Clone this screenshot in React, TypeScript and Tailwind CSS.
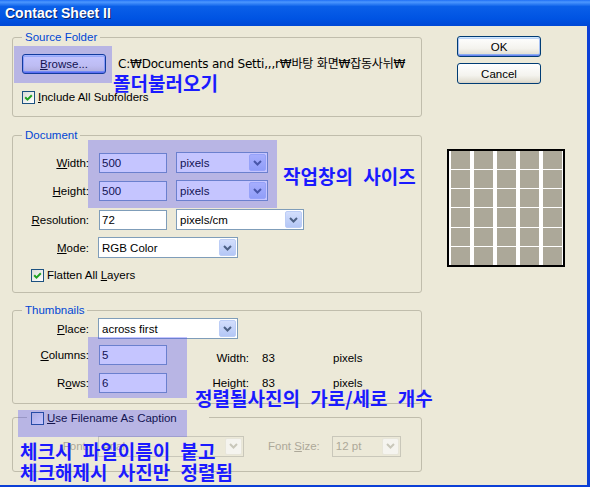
import type { ReactNode } from 'react'

// ─── Small XP-style controls ──────────────────────────────────────────────────

function XPButton({ children, isDefault, className }: { children: ReactNode; isDefault?: boolean; className: string }) {
  return (
    <div
      className={`flex items-center justify-center border border-[#003c74] rounded-[3px] bg-[linear-gradient(to_bottom,#ffffff_0%,#f4f3ee_60%,#e3e0d4_90%,#d6d0c5_100%)] ${
        isDefault
          ? 'shadow-[inset_0_1px_0_#cee7ff,inset_0_-1px_0_#6982ee,inset_1px_0_0_#a9c2f4,inset_-1px_0_0_#a9c2f4,inset_0_2px_0_#bcd4f6,inset_0_-2px_0_#89adf0]'
          : ''
      } ${className}`}
    >
      {children}
    </div>
  )
}

function Chevron({ color }: { color: string }) {
  return (
    <svg width="9" height="6" viewBox="0 0 9 6">
      <polyline points="1,1 4.5,4.5 8,1" fill="none" stroke={color} strokeWidth="2" />
    </svg>
  )
}

function Select({ value, className, disabled }: { value: string; className: string; disabled?: boolean }) {
  return (
    <div
      className={`flex h-[21px] border ${
        disabled ? 'border-[#c9c7ba] text-[#aca899]' : 'border-[#7f9db9] bg-white'
      } ${className}`}
    >
      <span className="flex-1 flex items-center pl-[3px] overflow-hidden whitespace-nowrap">{value}</span>
      <span
        className={`m-px w-[17px] flex items-center justify-center rounded-[2px] border ${
          disabled
            ? 'border-[#e8e6da] bg-[#f5f4ef]'
            : 'border-[#bccdf6] bg-[linear-gradient(to_bottom,#d3defc,#b4c7f6)]'
        }`}
      >
        <Chevron color={disabled ? '#c9c7ba' : '#4d6185'} />
      </span>
    </div>
  )
}

function TextBox({ value, className }: { value: string; className: string }) {
  return (
    <div className={`h-[20px] border border-[#7f9db9] bg-white flex items-center pl-[2px] ${className}`}>{value}</div>
  )
}

function Check({ checked, children }: { checked?: boolean; children: ReactNode }) {
  return (
    <div className="flex items-center">
      <span className="w-[13px] h-[13px] shrink-0 border border-[#1c5180] bg-[linear-gradient(135deg,#dcdcd7,#ffffff)] flex items-center justify-center">
        {checked && (
          <svg width="9" height="9" viewBox="0 0 9 9">
            <polyline points="1.2,4.2 3.5,6.6 7.8,2.2" fill="none" stroke="#21a121" strokeWidth="2" />
          </svg>
        )}
      </span>
      <span className="ml-[3px] whitespace-nowrap">{children}</span>
    </div>
  )
}

function Group({ title, className, children }: { title?: string; className: string; children: ReactNode }) {
  return (
    <div className={`relative border border-[#c0bdac] rounded-[3px] ${className}`}>
      {title && (
        <span className="absolute -top-[8px] left-[9px] px-[3px] bg-[#ece9d8] text-[#0046d5] leading-[14px] whitespace-nowrap">
          {title}
        </span>
      )}
      {children}
    </div>
  )
}

function Label({ children, disabled }: { children: ReactNode; disabled?: boolean }) {
  return (
    <span className={`w-[76px] shrink-0 text-right whitespace-nowrap ${disabled ? 'text-[#aca899]' : ''}`}>
      {children}
    </span>
  )
}

// ─── Annotation layer ─────────────────────────────────────────────────────────

const KO = "font-['Noto_Sans_CJK_KR',sans-serif] font-bold text-[19px] leading-[21px] text-[#1a1aff] [word-spacing:6px] whitespace-nowrap"

function Annotations() {
  return (
    <>
      <div className="absolute left-[14px] top-[46px] w-[98px] h-[37px] bg-[#4040ff]/30" />
      <div className={`absolute left-[113px] top-[72px] ${KO}`}>폴더불러오기</div>

      <div className="absolute left-[88px] top-[140px] w-[189px] h-[68px] bg-[#4040ff]/30" />
      <div className={`absolute left-[283px] top-[165px] ${KO}`}>작업창의 사이즈</div>

      <div className="absolute left-[88px] top-[337px] w-[99px] h-[61px] bg-[#4040ff]/30" />
      <div className={`absolute left-[195px] top-[387px] ${KO}`}>정렬될사진의 가로/세로 개수</div>

      <div className="absolute left-[18px] top-[410px] w-[169px] h-[27px] bg-[#4040ff]/30" />
      <div className={`absolute left-[20px] top-[440px] ${KO}`}>
        <div>체크시 파일이름이 붙고</div>
        <div>체크해제시 사진만 정렬됨</div>
      </div>
    </>
  )
}

// ─── Dialog ───────────────────────────────────────────────────────────────────

export default function App() {
  return (
    <div className="w-[590px] h-[487px] relative overflow-hidden flex flex-col bg-[#ece9d8] text-black text-[11.5px] leading-[14px] font-['Tahoma','Liberation_Sans',Arial,sans-serif]">
      {/* Title bar */}
      <div className="h-[26px] shrink-0 flex items-center pl-[5px] bg-[linear-gradient(to_bottom,#1f6ff5_0%,#4c97ff_8%,#0a5fe8_25%,#0054e3_70%,#0048d6_100%)]">
        <span className="text-white font-bold text-[14px] font-['Liberation_Sans',Arial,sans-serif] [text-shadow:1px_1px_0_#0a246a]">
          Contact Sheet II
        </span>
      </div>

      <div className="flex-1 flex border-r-[3px] border-b-[2px] border-[#0b3fd6]">
        {/* Left column */}
        <div className="ml-[12px] w-[410px] flex flex-col">
          <Group title="Source Folder" className="mt-[11px] h-[80px]">
            <div className="pl-[9px] pt-[16px]">
              <div className="flex items-center">
                <XPButton isDefault className="w-[84px] h-[20px]">
                  <span><u>B</u>rowse...</span>
                </XPButton>
                <span className="ml-[12px] text-[12px] whitespace-nowrap font-['DejaVu_Sans','Noto_Sans_CJK_KR',sans-serif] tracking-[-0.2px]">
                  C:₩Documents and Setti,,,r₩바탕 화면₩잡동사뉘₩
                </span>
              </div>
              <div className="mt-[16px]">
                <Check checked><u>I</u>nclude All Subfolders</Check>
              </div>
            </div>
          </Group>

          <Group title="Document" className="mt-[18px] h-[158px]">
            <div className="pt-[16px] flex flex-col">
              <div className="h-[21px] flex items-center">
                <Label><u>W</u>idth:</Label>
                <TextBox value="500" className="ml-[10px] w-[68px]" />
                <Select value="pixels" className="ml-[9px] w-[92px]" />
              </div>
              <div className="mt-[7px] h-[21px] flex items-center">
                <Label><u>H</u>eight:</Label>
                <TextBox value="500" className="ml-[10px] w-[68px]" />
                <Select value="pixels" className="ml-[9px] w-[92px]" />
              </div>
              <div className="mt-[8px] h-[21px] flex items-center">
                <Label><u>R</u>esolution:</Label>
                <TextBox value="72" className="ml-[10px] w-[68px]" />
                <Select value="pixels/cm" className="ml-[9px] w-[128px]" />
              </div>
              <div className="mt-[7px] h-[21px] flex items-center">
                <Label><u>M</u>ode:</Label>
                <Select value="RGB Color" className="ml-[9px] w-[140px]" />
              </div>
              <div className="mt-[10px] pl-[18px]">
                <Check checked>Flatten All <u>L</u>ayers</Check>
              </div>
            </div>
          </Group>

          <Group title="Thumbnails" className="mt-[17px] h-[94px]">
            <div className="pt-[7px] flex flex-col">
              <div className="h-[21px] flex items-center">
                <Label><u>P</u>lace:</Label>
                <Select value="across first" className="ml-[9px] w-[140px]" />
              </div>
              <div className="mt-[5px] h-[21px] flex items-center">
                <Label><u>C</u>olumns:</Label>
                <TextBox value="5" className="ml-[10px] w-[68px]" />
                <div className="flex pt-[6px]">
                  <span className="w-[82px] text-right">Width:</span>
                  <span className="ml-[13px] w-[71px]">83</span>
                  <span>pixels</span>
                </div>
              </div>
              <div className="mt-[7px] h-[21px] flex items-center">
                <Label>R<u>o</u>ws:</Label>
                <TextBox value="6" className="ml-[10px] w-[68px]" />
                <div className="flex">
                  <span className="w-[82px] text-right">Height:</span>
                  <span className="ml-[13px] w-[71px]">83</span>
                  <span>pixels</span>
                </div>
              </div>
            </div>
          </Group>

          <Group className="mt-[13px] h-[55px]">
            <div className="absolute left-[14px] -top-[7px] w-[182px] pl-[4px] bg-[#ece9d8]">
              <Check><u>U</u>se Filename As Caption</Check>
            </div>
            <div className="pt-[18px] h-[20px] flex items-center box-content">
              <Label disabled>Font:</Label>
              <Select disabled value="Arial" className="ml-[9px] w-[146px] h-[20px]" />
              <span className="ml-[24px] text-[#aca899] whitespace-nowrap">
                Font <u>S</u>ize:
              </span>
              <Select disabled value="12 pt" className="ml-[12px] w-[69px] h-[20px]" />
            </div>
          </Group>
        </div>

        {/* Right column */}
        <div className="ml-[25px] flex flex-col">
          <XPButton isDefault className="mt-[10px] ml-[10px] w-[84px] h-[21px]">
            OK
          </XPButton>
          <XPButton className="mt-[6px] ml-[10px] w-[84px] h-[21px]">Cancel</XPButton>

          <div className="mt-[65px] w-[118px] h-[118px] border-2 border-black bg-white pl-[2px] pr-[1px] grid grid-cols-5 grid-rows-6 gap-x-[4px] gap-y-[1px]">
            {Array.from({ length: 30 }).map((_, i) => (
              <div key={i} className="bg-[#aca899]" />
            ))}
          </div>
        </div>
      </div>

      <Annotations />
    </div>
  )
}
